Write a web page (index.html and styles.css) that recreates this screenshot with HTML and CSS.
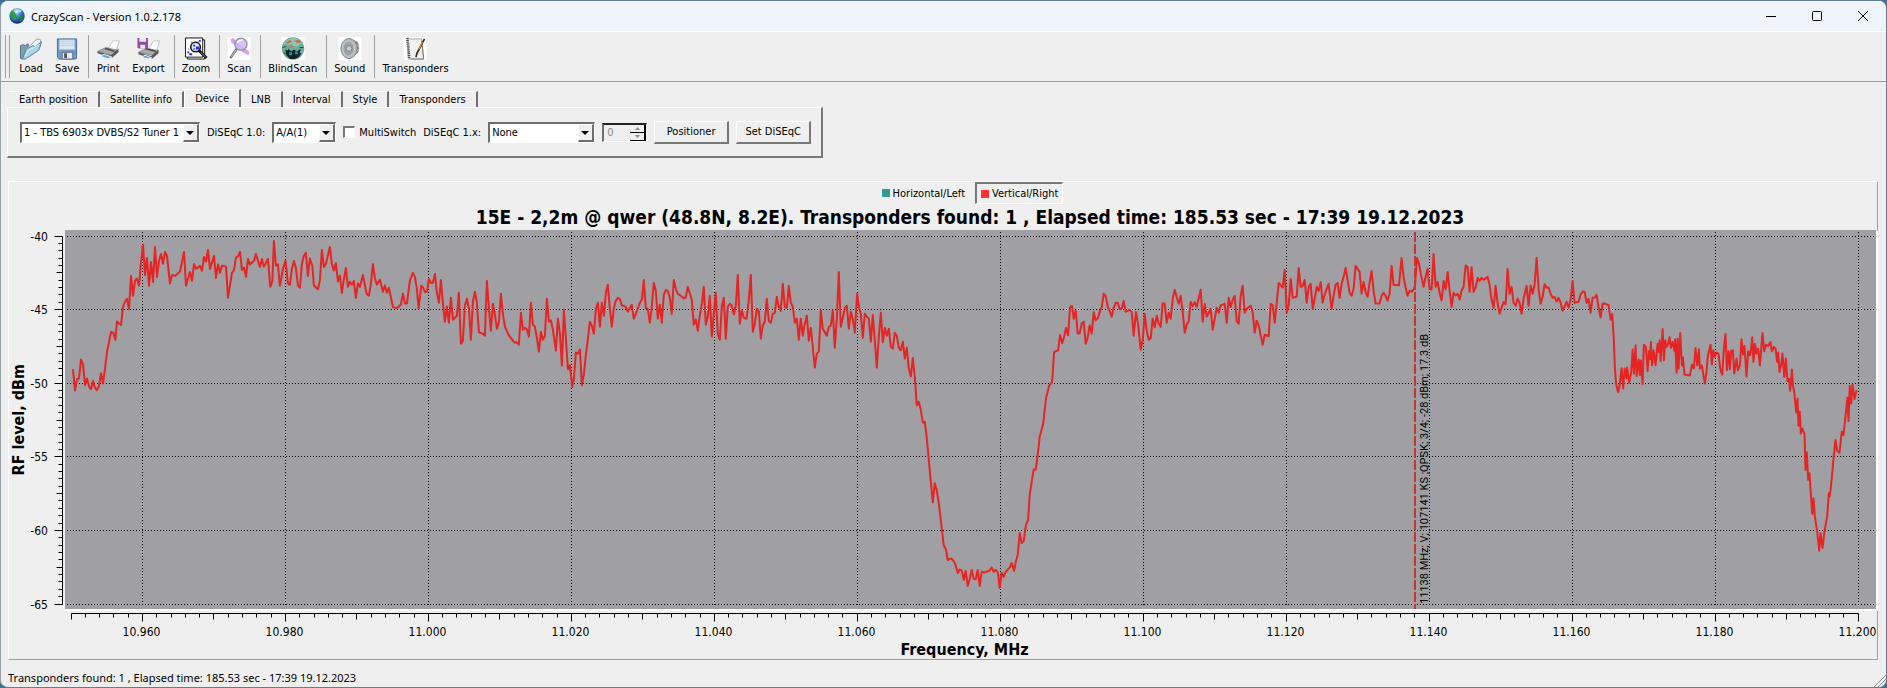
FILE: index.html
```html
<!DOCTYPE html>
<html lang="en">
<head>
  <title>CrazyScan</title>
  <meta charset="utf-8">
  <meta name="viewport" content="width=device-width, initial-scale=1">
  <link rel="stylesheet" href="styles.css">
</head>
<body>
  <div class="window">
    <header class="titlebar">
      <svg class="app-icon" viewBox="0 0 16 16" aria-hidden="true">
        <defs>
          <radialGradient id="globe" cx="40%" cy="25%" r="80%">
            <stop offset="0" stop-color="#c9ecff"/>
            <stop offset=".35" stop-color="#4a94d8"/>
            <stop offset="1" stop-color="#0a1d6e"/>
          </radialGradient>
        </defs>
        <circle cx="8" cy="8" r="7.7" fill="url(#globe)"/>
        <path d="M2 4l3-2.500 2 1-1 2 1 2 1 2-2 4-2-2-2-3-1-1z" fill="#2f9e3b"/>
        <path d="M11 8l3-1 1 2-2 4-2 1z" fill="#237a4c"/>
        <ellipse cx="8.500" cy="3" rx="4" ry="1.800" fill="#fff" opacity=".6"/>
      </svg>
      <h1 class="window-title">CrazyScan - Version 1.0.2.178</h1>
      <div class="window-buttons">
        <button class="window-button" type="button" aria-label="Minimize">
          <svg width="10" height="10" viewBox="0 0 10 10"><path d="M0 5.500h10"/></svg>
        </button>
        <button class="window-button" type="button" aria-label="Maximize">
          <svg width="10" height="10" viewBox="0 0 10 10"><rect x=".5" y=".5" width="9" height="9" rx="1"/></svg>
        </button>
        <button class="window-button" type="button" aria-label="Close">
          <svg width="10" height="10" viewBox="0 0 10 10"><path d="M0 0l10 10M10 0L0 10"/></svg>
        </button>
      </div>
    </header>

    <nav class="toolbar" aria-label="Toolbar">
      <span class="handle"></span>
      <button class="tool" type="button">
        <svg class="tool-icon" viewBox="0 0 24 24">
          <path d="M1 9l3-1 2 1 3-2 0 9-7 7-1-1z" fill="#7c9fb4" stroke="#4f6b7c"/>
          <path d="M7 13L18 2l4 1v7L6 22z" fill="#f3f8fa" stroke="#8aa1ad"/>
          <path d="M3 23l4-10 7-4 2 1 7-5-3 9L6 23z" fill="#a9d3e6" stroke="#557f95"/>
          <path d="M6 20l3-6 6-3 5-3" fill="none" stroke="#e4f5fb"/>
        </svg>
        <span>Load</span>
      </button>
      <button class="tool" type="button">
        <svg class="tool-icon" viewBox="0 0 24 24">
          <path d="M2 2h20v20l-1 1H4l-2-2z" fill="#6f9ac9" stroke="#49698f"/>
          <path d="M4 3h16v10H4z" fill="#dfeaf4" stroke="#a7c4df"/>
          <path d="M5 5h14M5 7h14M5 9h14" stroke="#b9cfe3"/>
          <path d="M7 16h11v7H7z" fill="#e6e9ee" stroke="#5d6d81"/>
          <path d="M9 17h3v5H9z" fill="#47566b"/>
        </svg>
        <span>Save</span>
      </button>
      <span class="separator"></span>
      <button class="tool" type="button">
        <svg class="tool-icon" viewBox="0 0 24 24">
          <path d="M12 12l5-8 7 0-4 11z" fill="#fdfdfd" stroke="#c4c4c4"/>
          <path d="M1 15l9-4 12 3-6 5z" fill="#a9a9a9" stroke="#8b8b8b"/>
          <path d="M9 12l10 3" stroke="#444" stroke-width="1.500"/>
          <path d="M1 15l14 4 8-7v4l-7 6-15-5z" fill="#5a5a5a"/>
          <path d="M4 20l4-2 8 3-4 2z" fill="#5da6d6" stroke="#f5f5f5"/>
        </svg>
        <span>Print</span>
      </button>
      <button class="tool" type="button">
        <svg class="tool-icon" viewBox="0 0 24 24">
          <path d="M13 12l5-8 6 0-3 11z" fill="#fdfdfd" stroke="#c4c4c4"/>
          <path d="M2 16l8-4 12 2-6 5z" fill="#a9a9a9" stroke="#8b8b8b"/>
          <path d="M9 12l11 3" stroke="#444" stroke-width="1.500"/>
          <path d="M2 16l13 4 8-7v4l-7 6-14-5z" fill="#5a5a5a"/>
          <path d="M5 21l4-2 7 3-4 1z" fill="#5da6d6" stroke="#f5f5f5"/>
          <path d="M1 1h11v11H2l-1-1z" fill="#8d4f9f"/>
          <path d="M3 1h7v4H3zM4 8h5v4H4z" fill="#f1e6f5"/>
        </svg>
        <span>Export</span>
      </button>
      <span class="separator"></span>
      <button class="tool" type="button">
        <svg class="tool-icon" viewBox="0 0 24 24">
          <path d="M3 3h18v20H3z" fill="#fff" stroke="#111"/>
          <path d="M1 1h18v20H1z" fill="#fff" stroke="#111"/>
          <path d="M15 3h2v2h-2zM13 5h2v1h-2zM3 15h2v2H3zM5 17h3v2H5zM15 11h2v2h-2zM4 12h1v1H4zM7 5h1v1H7z" fill="#2323ee"/>
          <circle cx="11.500" cy="10.500" r="5" fill="#dcebff" stroke="#111" stroke-width="1.600"/>
          <path d="M9 8h2v2H9zM12 10h3v3h-3zM9 12h2v1H9z" fill="#2323ee"/>
          <path d="M15 14l8 8" stroke="#111" stroke-width="3"/>
          <path d="M17 16l5 5" stroke="#9a9a9a"/>
        </svg>
        <span>Zoom</span>
      </button>
      <span class="separator"></span>
      <button class="tool" type="button">
        <svg class="tool-icon" viewBox="0 0 24 24">
          <path d="M0 0h24v24H0z" fill="#fff"/>
          <path d="M3 2l3-1 4 4 8 7 5 3-1 4-5-2-7-7-6-4z" fill="#d9a3ea"/>
          <circle cx="14" cy="7.500" r="6.300" fill="#cdb9f2" fill-opacity=".8" stroke="#8c93a3" stroke-width="1.400"/>
          <path d="M10 6q2-3 6-3" fill="none" stroke="#fff" stroke-width="1.500"/>
          <path d="M9.500 12.500L3 22" stroke="#6d7078" stroke-width="2.600"/>
          <path d="M9 13.500L4 20.500" stroke="#c6c9cf"/>
        </svg>
        <span>Scan</span>
      </button>
      <span class="separator"></span>
      <button class="tool" type="button">
        <svg class="tool-icon" viewBox="0 0 24 24">
          <path d="M0 0h24v24H0z" fill="#fff"/>
          <circle cx="12" cy="12" r="11.700" fill="#69ad9b"/>
          <path d="M2 7q5-6 10-6t9 5l-5 4-8-2z" fill="#8fc7b5"/>
          <path d="M4 6l5-3 2 2-4 2zM13 4l6-1 1 3-4 0zM10 7l2 3-3 1z" fill="#d5673c"/>
          <path d="M4 13l3 1 0-2 3 3 3-2 3 2 4-3-1 5 2 0-3 4-4 2H9l-4-4z" fill="#10211f"/>
          <path d="M8 16h3v3H8zM14 15h3v3h-3z" fill="#2b8ebf"/>
          <path d="M1 11l4-1M19 11l4 0M2 16l4 3M19 18l-3 3" stroke="#244d3e"/>
        </svg>
        <span>BlindScan</span>
      </button>
      <span class="separator"></span>
      <button class="tool" type="button">
        <svg class="tool-icon" viewBox="0 0 24 24">
          <path d="M0 0h24v24H0z" fill="#fff"/>
          <path d="M11 1l9 4q3 7 0 12l-9 6z" fill="#858a8d"/>
          <ellipse cx="11" cy="12" rx="8.500" ry="10.500" fill="#b4b8bb" stroke="#83888b"/>
          <ellipse cx="10.500" cy="12" rx="6" ry="8" fill="#9da2a5" stroke="#cfd2d4"/>
          <circle cx="11" cy="12" r="3" fill="#c9cccf" stroke="#7c8184"/>
          <path d="M20 8q3 4 0 7" fill="none" stroke="#b8bbbd"/>
        </svg>
        <span>Sound</span>
      </button>
      <span class="separator"></span>
      <button class="tool" type="button">
        <svg class="tool-icon" viewBox="0 0 24 24">
          <path d="M0 0h24v24H0z" fill="#fff"/>
          <path d="M4 2h15l2 21H6z" fill="#eef0f1" stroke="#a3a7aa"/>
          <path d="M19 4l2 19H8" fill="none" stroke="#777"/>
          <path d="M4 1l2 22" stroke="#444" stroke-width="3" stroke-dasharray="1 1"/>
          <path d="M22 2L14 17l-1 4" fill="none" stroke="#3a2a25" stroke-width="1.800"/>
          <path d="M20 5l-4 8" stroke="#d17a35" stroke-width="1.500"/>
        </svg>
        <span>Transponders</span>
      </button>
    </nav>

    <section class="settings">
      <div class="tabs" role="tablist">
        <button class="tab" type="button" role="tab">Earth position</button>
        <button class="tab" type="button" role="tab">Satellite info</button>
        <button class="tab tab-active" type="button" role="tab" aria-selected="true">Device</button>
        <button class="tab" type="button" role="tab">LNB</button>
        <button class="tab" type="button" role="tab">Interval</button>
        <button class="tab" type="button" role="tab">Style</button>
        <button class="tab" type="button" role="tab">Transponders</button>
      </div>
      <form class="panel">
        <span class="combo combo-tuner">
          <select class="combo-select" aria-label="Tuner">
            <option>1 - TBS 6903x DVBS/S2 Tuner 1</option>
          </select>
        </span>
        <label for="diseqc10">DiSEqC 1.0:</label>
        <span class="combo combo-port">
          <select class="combo-select" id="diseqc10">
            <option>A/A(1)</option>
          </select>
        </span>
        <label class="check">
          <input class="checkbox" type="checkbox">
          <span>MultiSwitch</span>
        </label>
        <label for="diseqc1x">DiSEqC 1.x:</label>
        <span class="combo combo-mode">
          <select class="combo-select" id="diseqc1x">
            <option>None</option>
          </select>
        </span>
        <span class="spin">
          <input class="spin-input" type="text" value="0" aria-label="Position" disabled>
          <span class="spin-buttons">
            <button class="spin-button" type="button" aria-label="Up" disabled><svg width="5" height="3" viewBox="0 0 5 3"><path d="M0 3l2.500-3L5 3z"/></svg></button>
            <button class="spin-button" type="button" aria-label="Down" disabled><svg width="5" height="3" viewBox="0 0 5 3"><path d="M0 0l2.500 3L5 0z"/></svg></button>
          </span>
        </span>
        <button class="button" type="button">Positioner</button>
        <button class="button" type="button">Set DiSEqC</button>
      </form>
    </section>

    <main class="chart">
      <div class="legend">
        <button class="legend-item" type="button"><span class="swatch swatch-horizontal"></span>Horizontal/Left</button>
        <button class="legend-item legend-item-on" type="button" aria-pressed="true"><span class="swatch swatch-vertical"></span>Vertical/Right</button>
      </div>
      <h2 class="chart-title">15E - 2,2m @ qwer (48.8N, 8.2E). Transponders found: 1 , Elapsed time: 185.53 sec - 17:39 19.12.2023</h2>
      <div class="chart-body">
        <div class="y-title"><span>RF level, dBm</span></div>
        <div class="canvas" id="canvas"></div>
      </div>
      <div class="x-title">Frequency, MHz</div>
    </main>

    <footer class="statusbar">
      <span>Transponders found: 1 , Elapsed time: 185.53 sec - 17:39 19.12.2023</span>
      <svg class="grip" width="12" height="12" viewBox="0 0 12 12"><path d="M0 12L12 0M4 12l8-8M8 12l4-4"/></svg>
    </footer>
  </div>
  <script src="chart.js"></script>
</body>
</html>
```
FILE: styles.css
```css
*, *::before, *::after {
  box-sizing: border-box;
}

body {
  margin: 0;
  background-color: #3f6f8f;
  color: #000000;
  font-family: "DejaVu Sans Condensed", "DejaVu Sans", sans-serif;
  font-size: 11px;
}

button, input, select {
  margin: 0;
  color: inherit;
  font: inherit;
}

.window {
  display: flex;
  flex-direction: column;
  min-height: 100vh;
  border: 1px solid #5f7f95;
  border-left-color: #9aa3a8;
  border-radius: 8px;
  background-color: #efefef;
  overflow: hidden;
}

/* Title bar */

.titlebar {
  display: flex;
  align-items: center;
  height: 31px;
  padding-left: 8px;
  border-bottom: 1px solid #ffffff;
  background-color: #eef4f9;
}

.app-icon {
  width: 16px;
  height: 16px;
}

.window-title {
  margin: 0 auto 0 6px;
  font-family: "Noto Sans", sans-serif;
  font-size: 11px;
  font-weight: 400;
}

.window-buttons {
  display: flex;
  height: 100%;
}

.window-button {
  display: flex;
  align-items: center;
  justify-content: center;
  width: 46px;
  padding: 0;
  border: none;
  background: none;
}

.window-button svg {
  fill: none;
  stroke: #000000;
}

/* Toolbar */

.toolbar {
  display: flex;
  height: 50px;
  padding: 3px 4px;
  border-bottom: 1px solid #989c9c;
}

.handle {
  width: 5px;
  margin-right: 3px;
  border: solid #a0a0a0;
  border-width: 0 1px;
}

.tool {
  display: flex;
  flex-direction: column;
  align-items: center;
  padding: 2px 6px 0;
  border: none;
  background: none;
  line-height: 18px;
}

.tool-icon {
  width: 24px;
  height: 24px;
}

.separator {
  width: 1px;
  margin: 0 1px 0 3px;
  background-color: #a0a0a0;
}

/* Tabs and device settings */

.settings {
  align-self: flex-start;
  padding: 7px 6px 0;
}

.tabs {
  display: flex;
  align-items: flex-end;
  padding-left: 2px;
}

.tab {
  height: 16px;
  padding: 0 10px;
  border: solid #ffffff;
  border-width: 1px 2px 0 0;
  border-right-color: #6e6e6e;
  background: none;
  line-height: 16px;
}

.tab-active {
  height: 18px;
  border-left: 1px solid #ffffff;
}

.panel {
  display: flex;
  align-items: center;
  gap: 7px;
  height: 51px;
  padding: 0 10px 0 12px;
  border: 1px solid #ffffff;
  border-right: 2px solid #787878;
  border-bottom: 2px solid #787878;
}

.combo {
  position: relative;
  height: 21px;
  border: 2px solid #6e6e6e;
  border-right: 1px solid #ffffff;
  border-bottom: 1px solid #ffffff;
  background-color: #ffffff;
}

.combo-tuner {
  width: 180px;
}

.combo-port {
  width: 64px;
}

.combo-mode {
  width: 107px;
}

.combo-select {
  width: 100%;
  height: 100%;
  padding: 0 16px 1px 2px;
  border: none;
  background: none;
  appearance: none;
}

.combo::before {
  content: '';
  position: absolute;
  top: 0;
  right: 0;
  width: 16px;
  height: 100%;
  border: 1px solid #ffffff;
  border-right: 2px solid #6e6e6e;
  border-bottom: 2px solid #6e6e6e;
  background-color: #efefef;
  pointer-events: none;
}

.combo::after {
  content: '';
  position: absolute;
  top: 7px;
  right: 5px;
  border: 4px solid transparent;
  border-top-color: #000000;
  border-bottom: none;
  pointer-events: none;
}

.check {
  display: flex;
  align-items: center;
  gap: 4px;
}

.checkbox {
  width: 12px;
  height: 12px;
  border: 1px solid #ffffff;
  border-top: 2px solid #787878;
  border-left: 2px solid #787878;
  background-color: #ffffff;
  appearance: none;
}

.spin {
  display: flex;
  width: 45px;
  height: 19px;
  border: 2px solid #222222;
  border-left-color: #6e6e6e;
  border-right: 1px solid #ffffff;
  border-bottom: 1px solid #ffffff;
}

.spin-input {
  flex: 1;
  min-width: 0;
  padding: 0 3px;
  border: none;
  background: none;
  color: #8a8a8a;
}

.spin-buttons {
  display: flex;
  flex-direction: column;
  width: 16px;
}

.spin-button {
  display: flex;
  flex: 1;
  align-items: center;
  justify-content: center;
  padding: 0;
  border: solid #000000;
  border-width: 0 2px 1px 0;
  background: none;
}

.spin-button svg {
  fill: #8a8a8a;
}

.button {
  width: 75px;
  height: 23px;
  padding: 0;
  border: 1px solid #ffffff;
  border-right: 2px solid #787878;
  border-bottom: 2px solid #787878;
  background: none;
}

/* Chart */

.chart {
  display: flex;
  flex: 1;
  flex-direction: column;
  margin: 23px 8px 0 7px;
  border: 1px solid #a0a0a0;
  border-top-color: #ffffff;
  border-left-color: #ffffff;
}

.legend {
  display: flex;
  justify-content: center;
  padding-left: 54px;
}

.legend-item {
  display: flex;
  align-items: center;
  gap: 3px;
  height: 22px;
  padding: 0 4px;
  border: 1px solid transparent;
  background: none;
}

.legend-item + .legend-item {
  margin-left: 5px;
}

.legend-item-on {
  border: 1px solid #ffffff;
  border-top: 2px solid #787878;
  border-left: 2px solid #787878;
}

.swatch {
  width: 8px;
  height: 8px;
}

.swatch-horizontal {
  background-color: #339999;
}

.swatch-vertical {
  background-color: #ff3333;
}

.chart-title {
  margin: 0;
  padding-left: 54px;
  font-size: 19px;
  line-height: 26px;
  text-align: center;
}

.chart-body {
  display: flex;
  flex: 1;
}

.y-title, .x-title {
  font-size: 16px;
  font-weight: 700;
}

.y-title {
  display: flex;
  align-items: center;
  justify-content: center;
  width: 20px;
  padding-bottom: 32px;
  line-height: 20px;
  white-space: nowrap;
}

.y-title span {
  writing-mode: vertical-rl;
  transform: rotate(180deg);
}

.canvas {
  flex: 1;
  min-width: 0;
  min-height: 200px;
}

.canvas svg {
  display: block;
  width: 100%;
  height: 100%;
  overflow: visible;
}

.x-title {
  padding-left: 43px;
  line-height: 18px;
  text-align: center;
}

.plot {
  fill: #a0a0a4;
}

.plot-light {
  fill: none;
  stroke: #ffffff;
  stroke-width: 2;
}

.grid {
  fill: none;
  stroke: #000000;
  stroke-dasharray: 1 2;
}

.axis {
  fill: none;
  stroke: #000000;
}

.axis-label {
  font-size: 12px;
}

.trace {
  fill: none;
  stroke: #e62424;
  stroke-width: 2;
  stroke-linejoin: round;
}

.marker {
  stroke: #c83434;
  stroke-width: 2;
  stroke-dasharray: 10 2;
}

.marker-label {
  font-family: Roboto, sans-serif;
  font-size: 11px;
}

/* Status bar */

.statusbar {
  display: flex;
  align-items: center;
  justify-content: space-between;
  height: 27px;
  padding-left: 7px;
  padding-top: 8px;
  font-family: "Noto Sans", sans-serif;
}

.grip {
  align-self: flex-end;
  fill: none;
  stroke: #8c8c8c;
}
```
FILE: chart.js
```js
const canvas = document.querySelector('#canvas')

const FREQ_MIN = 10950
const FREQ_MAX = 11200
const LEVEL_MAX = -40
const LEVEL_MIN = -65

const FREQ_STEP = 21.45
const LEVEL_STEP = 44.3

// sweep blocks, each with its own origin
const sweep = [
  {
    x: -213, y: -61,
    points: `219,462 225,526 231,492 237,490 243,433 249,447 255,510 261,490 268,516 273,522 279,497 285,518 291,525 297,512 303,474 309,505
      315,460 321,410 333,350 340,352 346,373 351,318 363,329 369,275 375,258 381,250 387,281 393,181 399,241 405,195 411,190 417,211 423,140
      429,87 435,178 441,127 447,211 453,139 459,199 465,94 471,184 477,136 483,115 489,145 495,109 501,121 507,178 510,204 516,178 525,181
      540,168 552,109 558,211 570,169 576,196 582,145 588,160 600,151 606,166 612,124 618,138 624,103 630,160 642,121 648,187 654,147 660,172
      666,150 678,153 684,247 696,172 702,163 708,125 714,122 720,109 726,163 732,156 738,184 744,130 750,147 762,136 768,115 780,154 786,130
      792,153 804,130 811,214 817,198 822,76 828,150 834,146 840,211 849,160 857,136 864,204 870,208 876,160 882,136 888,157 894,210 900,217
      906,145 912,120 918,112 924,181 930,129 937,150 942,210 954,221 960,195 966,103 972,154 978,145 990,94 996,145 1002,165 1008,142
      1014,198 1020,180 1026,232 1032,190 1038,157 1044,214 1050,199 1056,208 1062,196 1068,247 1074,204 1080,214 1089,178 1100,235 1107,241
      1113,205 1119,145 1125,189 1131,208 1140,192 1149,229 1155,210 1161,232 1167,217 1179,274 1190,279 1203,267 1209,235 1215,264 1221,264
      1230,195 1239,172 1245,184 1251,220 1256,280`
  },
  {
    x: 987, y: -46,
    points: `64,196 70,202 75,214 81,214 87,175 93,187 99,187 105,160 111,217 117,247 123,178 129,247 135,304 141,258 147,307 153,232 159,298
      171,286 177,217 183,370 189,361 195,256 201,235 207,265 213,358 219,244 225,214 231,247 237,336 249,340 255,346 261,181 267,262 273,331
      279,250 285,283 291,325 297,305 303,220 309,280 315,319 327,345 339,361 345,367 351,366 357,373 363,277 369,328 375,322 381,327 387,349
      393,247 399,313 405,319 411,352 417,394 423,334 429,358 435,346 441,235 447,304 453,300 459,328 468,391 474,295 480,340 486,436 492,268
      498,355 504,447 510,435 517,501 522,475 528,397 534,400 540,388 546,495 552,462 558,403 564,355 570,304 576,316 582,340 588,265 594,247
      600,319 606,247 612,286 618,217 624,193 630,262 636,319 642,265 648,241 654,232 660,235 666,255 678,259 684,274 696,253 702,295 708,280
      720,247 726,238 732,178 738,262 744,265 750,307 756,258 762,187 768,211 774,295 780,253 786,307 792,223 798,208 804,211 810,231 816,280
      822,178 828,205 834,220 846,228 852,234 858,231 864,199 876,238 882,313 888,297 894,331 900,286 906,250 912,199 918,313 924,289 930,226
      936,349 942,280 948,217 954,340 960,358 966,259 972,232 978,355 984,259 990,250 996,256 1002,282 1008,256 1014,163 1020,310 1026,270
      1032,292 1040,295 1046,247 1053,163 1059,334 1065,310 1071,265 1077,272 1083,355 1089,315 1095,304 1101,235 1107,301 1113,307 1119,280
      1125,277 1131,229 1137,259 1143,271 1149,190 1155,259 1161,262 1167,196 1173,247 1179,259 1185,307 1191,295 1197,358 1203,295 1209,346
      1215,310 1221,286 1227,361 1233,322 1239,380 1245,442 1251,400 1257,394`
  },
  {
    x: 2187, y: -196,
    points: `63,420 69,475 81,496 87,470 93,466 99,420 105,532 111,445 117,304 123,469 129,442 135,414 141,406 147,475 153,424 159,445 165,487
      172,370 178,412 183,430 189,502 195,430 201,439 207,444 213,514 219,433 225,511 231,592 237,499 243,427 249,516 255,472 261,496 267,475
      273,529 279,535 285,487 291,496 297,532 303,540 309,514 315,565 321,532 327,595 333,619 339,563 345,622 351,706 357,695 363,720`
  },
  {
    x: 2247, y: 434,
    points: `309,128 315,125 321,175 328,250 339,367 345,310 351,332 357,370 363,420 367,456 372,497 378,508 384,541 394,537 400,542 406,552
      414,580 420,570 426,573 432,601 438,574 444,619 450,598 456,571 462,598 468,599 474,571 480,619 486,576 494,579 504,575 510,573 516,563
      522,577 528,571 534,577 540,625 546,580 552,592 558,577 570,563 576,550 583,574 588,547 594,527 600,460 606,490 612,484 619,433 625,421
      630,345 636,305 642,268 648,270 654,225 660,170 670,132 679,52 688,17 697,6`
  },
  {
    x: 2187, y: -196,
    points: `763,545 775,540 781,494 787,519 793,500 799,472 805,495 811,409 817,407 822,445 828,420 834,489 840,489 846,459 852,454 858,520
      864,502 870,465 876,490 882,425 888,450 894,444 900,425 906,410 912,370 918,377 924,409 930,421 936,439 942,412 948,398 954,397 960,416
      966,415 972,392 978,424 990,418 996,425 1002,496 1009,425 1015,459 1023,538 1029,510 1035,430 1041,480 1047,508 1053,504 1059,445
      1065,471 1071,436 1077,459 1083,469 1089,398 1095,400 1101,457 1107,427 1113,445 1119,385 1125,358 1131,380 1137,400 1143,376 1149,424
      1155,487 1161,462 1167,453 1173,394 1179,408 1185,395 1191,409 1203,358`
  },
  {
    x: 3387, y: -61,
    points: `9,319 15,265 21,304 33,280 39,343 51,277 57,292 63,270 75,265 81,322 87,247 93,275 99,253 105,241 111,318 117,325 123,240 129,211
      135,292 141,280 153,271 159,292 165,352 171,316 177,330 183,360 189,388 195,358 207,363 213,265 219,270 225,322 231,262 237,202 249,216
      255,163 261,291 267,270 273,190 279,247 291,244 297,157 303,214 309,211 315,193 321,262 327,214 333,205 339,280 345,250 351,214 357,226
      363,199 369,261 375,238 387,205 396,281 402,241 408,208 414,202 420,247 426,205 432,184 438,157 444,193 450,232 456,241 462,220 468,151
      480,169 486,234 492,199 498,229 504,244 510,202 516,166 522,226 528,264 540,264 546,241 552,232 558,241 564,256 570,235 576,151 582,208
      598,209 606,127 612,186 618,216 624,241 630,225 636,229 642,222 646,210 652,127 658,145 664,178 672,214 678,184 684,160 690,220 696,222
      702,115 708,214 714,199 720,232 726,255 732,196 738,222 744,169 750,225 756,274 762,232 768,240 774,235 780,252 786,225 792,214 798,150
      804,154 810,229 816,155 822,229 828,216 834,187 840,196 846,187 852,193 864,184 870,208 876,253 882,277 888,211 894,262 900,295 906,277
      912,260 918,267 924,160 930,235 936,214 942,262 948,271 954,250 960,262 966,295 972,250 981,211 987,271 993,210 999,235 1005,208
      1011,127 1017,220 1023,265 1029,244 1035,206 1041,217 1047,216 1053,235 1059,247 1065,244 1071,258 1077,247 1083,262 1089,286 1101,259
      1107,277 1113,253 1119,196`
  },
  {
    x: 4467, y: -61,
    points: `45,262 57,259 63,238 69,228 75,229 81,262 87,250 93,292 99,247 105,247 111,238 117,277 123,306 129,265 135,264 147,269 153,313
      158,296 162,360 166,460 170,508 176,531 180,510 186,459 191,520 195,460 201,490 203,457 209,503 215,470 219,403 223,475 228,390 231,483
      237,433 241,480 244,436 249,507 253,388 259,395 264,468 268,408 271,432 274,380 277,450 282,405 288,450 294,385 297,410 300,375 303,438
      309,341 313,435 317,375 321,395 325,388 330,366 334,398 339,380 345,408 347,372 351,472 354,370 357,460 362,353 367,450 370,427 375,478
      385,480 391,481 397,448 403,460 408,398 413,450 418,402 421,460 427,450 433,490 436,505 441,470 445,420 453,388 457,448 461,405 466,425
      470,412 477,415 482,460 488,478 493,400 498,356 502,465 507,408 511,462 515,407 520,405 524,475 531,430 535,465 541,450 546,372 551,418
      555,392 561,484 566,408 571,420 575,398 578,366 582,440 586,385 591,415 596,400 601,450 609,353 614,408 619,388 626,392 633,380 637,408
      643,395 648,400 653,440 656,412 660,470 665,448 669,415 674,485 679,430 684,498 688,490 692,527 697,463 700,510 704,530 710,592 714,550
      717,632 721,590 724,655 728,640 735,657 738,765 742,712 746,795 750,775 754,835 758,897 762,850 766,905 773,950 779,1008 783,955
      789,1000 795,950 803,905 808,835 811,845 817,790 822,730 828,675 833,708 840,713 847,650 852,660 857,610 864,548 867,618 871,512
      875,565 879,508 885,552 891,525`
  }
]

const samples = sweep.flatMap((block) => block.points.trim().split(/\s+/).map((pair) => {
  const [x, y] = pair.split(',').map(Number)
  return {
    freq: FREQ_MIN + (x + block.x) / FREQ_STEP,
    level: LEVEL_MAX - (y + block.y) / LEVEL_STEP
  }
}))

function draw() {
  const width = canvas.clientWidth
  const height = canvas.clientHeight
  const left = 36
  const right = width - 1
  const bottom = height - 32

  const scaleX = (freq) => left + 6 + (freq - FREQ_MIN) / (FREQ_MAX - FREQ_MIN) * (right - left - 24)
  const scaleY = (level) => 6 + (LEVEL_MAX - level) / (LEVEL_MAX - LEVEL_MIN) * (bottom - 11)
  const snap = (value) => Math.floor(value) + 0.5

  let grid = ''
  let axis = `M${left - 2.5} ${snap(scaleY(LEVEL_MAX))}V${snap(scaleY(LEVEL_MIN))}`
  let labels = ''

  for (let i = 0; i <= 50; i++) {
    const level = LEVEL_MAX - i / 2
    const y = snap(scaleY(level))
    const size = i % 10 === 0 ? 8 : i % 5 === 0 ? 6 : 4
    axis += `M${left - 2.5} ${y}h${-size}`
    if (i % 10 === 0) {
      grid += `M${left + 2} ${y}H${right - 1}`
      labels += `<text class="axis-label" x="${left - 17}" y="${y + 4}" text-anchor="end">${level}</text>`
    }
  }

  const drawFreqTick = (freq, size) => {
    axis += `M${snap(scaleX(freq))} ${bottom + 4.5}v${size}`
  }

  axis += `M${snap(scaleX(FREQ_MIN))} ${bottom + 4.5}H${snap(scaleX(FREQ_MAX))}`
  for (let freq = FREQ_MIN; freq <= FREQ_MAX; freq += 10) {
    const major = freq % 20 === 0
    drawFreqTick(freq, major ? 8 : 6)
    if (freq < FREQ_MAX) {
      for (let i = 2; i < 10; i += 2) {
        drawFreqTick(freq + i, 4)
      }
    }
    if (major) {
      const x = snap(scaleX(freq))
      grid += `M${x} 2V${bottom - 2}`
      labels += `<text class="axis-label" x="${x - 1}" y="${bottom + 27}" text-anchor="middle">${(freq / 1000).toFixed(3)}</text>`
    }
  }

  const trace = samples.map(({ freq, level }) => `${scaleX(freq).toFixed(1)},${scaleY(level).toFixed(1)}`).join(' ')
  const marker = Math.ceil(scaleX(11138))

  canvas.innerHTML = `
    <svg role="img" aria-label="RF level by frequency">
      <rect class="plot" x="${left}" y="0" width="${right - left}" height="${bottom}"/>
      <path class="plot-light" d="M${left} ${bottom + 1}H${right + 1}V1"/>
      <path class="grid" d="${grid}"/>
      <path class="axis" d="${axis}"/>
      ${labels}
      <polyline class="trace" points="${trace}"/>
      <path class="marker" d="M${marker} 2V${bottom}"/>
      <text class="marker-label" transform="translate(${marker + 13} ${bottom - 5}) rotate(-90)">11138 MHz; V; 107141 KS ;QPSK; 3/4; -28 dBm; 17.3 dB</text>
    </svg>`
}

draw()
window.addEventListener('resize', draw)
```
